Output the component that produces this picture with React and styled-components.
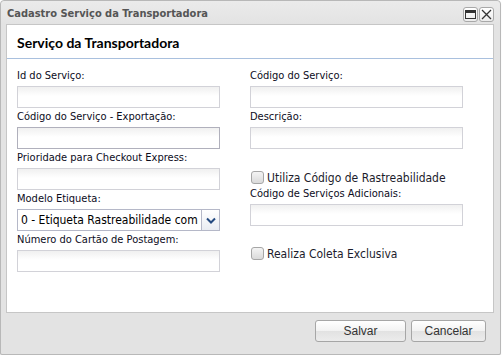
import styled, { createGlobalStyle } from 'styled-components';

const GlobalStyle = createGlobalStyle`
  body {
    margin: 0;
    background: #ffffff;
    font-family: "Liberation Sans", Arial, sans-serif;
  }
`

const leftFields = [
  { label: 'Id do Serviço:' },
  { label: 'Código do Serviço - Exportação:', dark: true },
  { label: 'Prioridade para Checkout Express:' },
]

export default function App() {
  return (
    <>
      <GlobalStyle />
      <Window>
        <TitleBar>
          <Title>Cadastro Serviço da Transportadora</Title>
          <Tools>
            <ToolButton>
              <svg width="11" height="9" viewBox="0 0 11 9">
                <rect x="0.5" y="0.5" width="10" height="8" fill="none" stroke="#333" />
                <rect x="1" y="1" width="9" height="2" fill="#333" />
              </svg>
            </ToolButton>
            <ToolButton>
              <svg width="11" height="11" viewBox="0 0 11 11">
                <path d="M1 1 L10 10 M10 1 L1 10" stroke="#333" strokeWidth="1.3" />
              </svg>
            </ToolButton>
          </Tools>
        </TitleBar>

        <Panel>
          <Heading>Serviço da Transportadora</Heading>
          <Form>
            <Column>
              {leftFields.map((f, i) => (
                <Field key={i}>
                  <Label>{f.label}</Label>
                  <Input dark={f.dark} />
                </Field>
              ))}
              <Field>
                <Label>Modelo Etiqueta:</Label>
                <Select>
                  <SelectText>0 - Etiqueta Rastreabilidade com</SelectText>
                  <SelectArrow>
                    <svg width="10" height="7" viewBox="0 0 10 7">
                      <path d="M1 1.5 L5 5.5 L9 1.5" fill="none" stroke="#244a80" strokeWidth="2" />
                    </svg>
                  </SelectArrow>
                </Select>
              </Field>
              <Field>
                <Label>Número do Cartão de Postagem:</Label>
                <Input />
              </Field>
            </Column>

            <Column>
              <Field>
                <Label>Código do Serviço:</Label>
                <Input />
              </Field>
              <Field>
                <Label>Descrição:</Label>
                <Input />
              </Field>
              <CheckRow top={19}>
                <Box />
                <CheckText>Utiliza Código de Rastreabilidade</CheckText>
              </CheckRow>
              <Field>
                <Label>Código de Serviços Adicionais:</Label>
                <Input />
              </Field>
              <CheckRow top={18}>
                <Box />
                <CheckText>Realiza Coleta Exclusiva</CheckText>
              </CheckRow>
            </Column>
          </Form>
        </Panel>

        <Footer>
          <Button width={91}>Salvar</Button>
          <Button width={75}>Cancelar</Button>
        </Footer>
      </Window>
    </>
  );
}

const Window = styled.div`
  width: 499px;
  height: 353px;
  border: 1px solid #b8b8b8;
  border-radius: 4px 4px 2px 2px;
  background: #e3e3e3;
  display: flex;
  flex-direction: column;
  box-shadow: 0 1px 1px rgba(0, 0, 0, 0.15);
`

const TitleBar = styled.div`
  height: 23px;
  padding: 0 6px 0 6px;
  display: flex;
  align-items: center;
  justify-content: space-between;
  background: linear-gradient(#ebebeb, #e3e3e3);
  border-radius: 4px 4px 0 0;
`

const Title = styled.div`
  font-family: "DejaVu Sans Condensed", "DejaVu Sans", sans-serif;
  font-weight: 700;
  font-size: 11px;
  color: #555555;
  padding-top: 1px;
`

const Tools = styled.div`
  display: flex;
  gap: 1px;
  padding-top: 3px;
`

const ToolButton = styled.div`
  width: 15px;
  height: 15px;
  box-sizing: border-box;
  border: 1px solid #a8a8a8;
  border-radius: 3px;
  background: linear-gradient(#ffffff, #ececec);
  display: flex;
  align-items: center;
  justify-content: center;
`

const Panel = styled.div`
  margin: 0 6px 0 5px;
  height: 287px;
  background: #ffffff;
  border: 1px solid #c6c6c6;
  display: flex;
  flex-direction: column;
`

const Heading = styled.div`
  height: 34px;
  box-sizing: border-box;
  padding: 9px 0 0 10px;
  border-bottom: 1px solid #a9c0de;
  font-family: Lato, "DejaVu Sans", sans-serif;
  font-weight: 700;
  font-size: 14px;
  color: #000000;
`

const Form = styled.div`
  display: grid;
  grid-template-columns: 203px 213px;
  column-gap: 30px;
  padding: 9px 0 0 10px;
  align-items: start;
`

const Column = styled.div`
  display: flex;
  flex-direction: column;
`

const Field = styled.div`
  display: flex;
  flex-direction: column;
  margin-bottom: 1px;
`

const Label = styled.div`
  height: 16px;
  line-height: 16px;
  margin-bottom: 2px;
  font-family: "DejaVu Sans Condensed", "DejaVu Sans", sans-serif;
  font-size: 11px;
  color: #0c0c1c;
  white-space: nowrap;
`

const Input = styled.div`
  height: 22px;
  box-sizing: border-box;
  border: 1px solid ${(p) => (p.dark ? '#b0b0bc' : '#d2d2d8')};
  background: linear-gradient(#f0f0f0, #ffffff 45%);
`

const Select = styled.div`
  height: 22px;
  box-sizing: border-box;
  border: 1px solid #b5b8c8;
  display: flex;
  background: #ffffff;
`

const SelectText = styled.div`
  flex: 1;
  padding-left: 3px;
  line-height: 20px;
  font-family: "DejaVu Sans Condensed", "DejaVu Sans", sans-serif;
  font-size: 12px;
  color: #000000;
  white-space: nowrap;
  overflow: hidden;
`

const SelectArrow = styled.div`
  width: 17px;
  border-left: 1px solid #b5b8c8;
  background: linear-gradient(#ffffff, #e9ecf2);
  display: flex;
  align-items: center;
  justify-content: center;
`

const CheckRow = styled.div`
  display: flex;
  align-items: center;
  gap: 3px;
  height: 17px;
  margin-top: ${(p) => p.top}px;
  padding-left: 1px;
`

const Box = styled.div`
  width: 13px;
  height: 13px;
  box-sizing: border-box;
  border: 1px solid #a6a6a6;
  border-radius: 3px;
  background: linear-gradient(#f4f4f4, #dadada);
`

const CheckText = styled.div`
  font-family: "DejaVu Sans Condensed", "DejaVu Sans", sans-serif;
  font-size: 12px;
  color: #1c1c2c;
  white-space: nowrap;
`

const Footer = styled.div`
  flex: 1;
  display: flex;
  justify-content: flex-end;
  align-items: flex-start;
  gap: 5px;
  padding: 7px 14px 0 0;
`

const Button = styled.div`
  width: ${(p) => p.width}px;
  height: 22px;
  box-sizing: border-box;
  border: 1px solid #a6a6a6;
  border-radius: 3px;
  background: linear-gradient(#ffffff 0%, #f2f2f2 50%, #e2e2e2 51%, #ececec 100%);
  display: flex;
  align-items: center;
  justify-content: center;
  font-family: "Liberation Sans", Arial, sans-serif;
  font-size: 12px;
  color: #333333;
`
